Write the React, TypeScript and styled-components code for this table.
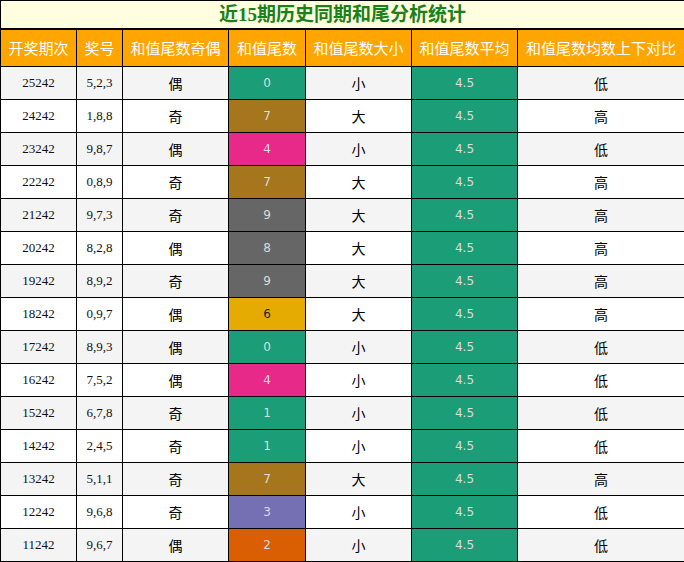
import React from 'react';
import styled, { createGlobalStyle } from 'styled-components';

const GlobalStyle = createGlobalStyle`
    html, body {
        margin: 0;
        padding: 0;
        background: #ffffff;
    }
`;

const Table = styled.table`
    width: 684px;
    border-collapse: collapse;
    table-layout: fixed;
    border: 1px solid #000;
    font-family: 'Liberation Serif', 'Noto Sans CJK SC', serif;
`;

const TitleCell = styled.th`
    height: 27px;
    padding: 0;
    border: 1px solid #000;
    border-bottom-width: 2px;
    background: #ffffe0;
    color: #1a801a;
    font-size: 19px;
    font-weight: bold;
    text-align: center;
    line-height: 27px;
`;

const HeadCell = styled.th`
    height: 36px;
    padding: 0;
    border: 1px solid #000;
    background: #ffa500;
    color: #ffffff;
    font-family: 'Noto Sans CJK SC', sans-serif;
    font-size: 15px;
    font-weight: normal;
    line-height: 20px;
    text-align: center;
    white-space: nowrap;
`;

const Row = styled.tr<{ $odd: boolean }>`
    background: ${(p) => (p.$odd ? '#f4f4f4' : '#ffffff')};
`;

const Cell = styled.td`
    height: 32px;
    padding: 0;
    border: 1px solid #000;
    text-align: center;
    color: #111;
    font-size: 13px;
    line-height: 18px;
`;

const WordCell = styled(Cell)`
    font-family: 'Noto Sans CJK SC', sans-serif;
    font-size: 14px;
    color: #000;
`;

const ColorCell = styled(Cell)<{ $bg: string; $dark?: boolean }>`
    background: ${(p) => p.$bg};
    color: ${(p) => (p.$dark ? '#222' : '#dcdcdc')};
    font-family: 'DejaVu Sans', sans-serif;
    font-size: 12px;
`;

const tailColors: Record<number, string> = {
    0: '#1b9e77',
    1: '#1b9e77',
    2: '#d95f02',
    3: '#7570b3',
    4: '#e7298a',
    6: '#e6ab02',
    7: '#a6761d',
    8: '#666666',
    9: '#666666',
};

const widths = [76, 46, 106, 77, 106, 106, 167];

const headers = ['开奖期次', '奖号', '和值尾数奇偶', '和值尾数', '和值尾数大小', '和值尾数平均', '和值尾数均数上下对比'];

const rows: [string, string, string, number, string, string][] = [
    ['25242', '5,2,3', '偶', 0, '小', '低'],
    ['24242', '1,8,8', '奇', 7, '大', '高'],
    ['23242', '9,8,7', '偶', 4, '小', '低'],
    ['22242', '0,8,9', '奇', 7, '大', '高'],
    ['21242', '9,7,3', '奇', 9, '大', '高'],
    ['20242', '8,2,8', '偶', 8, '大', '高'],
    ['19242', '8,9,2', '奇', 9, '大', '高'],
    ['18242', '0,9,7', '偶', 6, '大', '高'],
    ['17242', '8,9,3', '偶', 0, '小', '低'],
    ['16242', '7,5,2', '偶', 4, '小', '低'],
    ['15242', '6,7,8', '奇', 1, '小', '低'],
    ['14242', '2,4,5', '奇', 1, '小', '低'],
    ['13242', '5,1,1', '奇', 7, '大', '高'],
    ['12242', '9,6,8', '奇', 3, '小', '低'],
    ['11242', '9,6,7', '偶', 2, '小', '低'],
];

export default function App() {
    return (
        <>
            <GlobalStyle />
            <Table>
                <colgroup>
                    {widths.map((w, i) => (
                        <col key={i} style={{ width: w }} />
                    ))}
                </colgroup>
                <thead>
                    <tr>
                        <TitleCell colSpan={7}>近15期历史同期和尾分析统计</TitleCell>
                    </tr>
                    <tr>
                        {headers.map((h) => (
                            <HeadCell key={h}>{h}</HeadCell>
                        ))}
                    </tr>
                </thead>
                <tbody>
                    {rows.map(([issue, nums, parity, tail, size, cmp], i) => (
                        <Row key={issue} $odd={i % 2 === 0}>
                            <Cell>{issue}</Cell>
                            <Cell>{nums}</Cell>
                            <WordCell>{parity}</WordCell>
                            <ColorCell $bg={tailColors[tail]} $dark={tail === 6}>
                                {tail}
                            </ColorCell>
                            <WordCell>{size}</WordCell>
                            <ColorCell $bg="#1b9e77">4.5</ColorCell>
                            <WordCell>{cmp}</WordCell>
                        </Row>
                    ))}
                </tbody>
            </Table>
        </>
    );
}
